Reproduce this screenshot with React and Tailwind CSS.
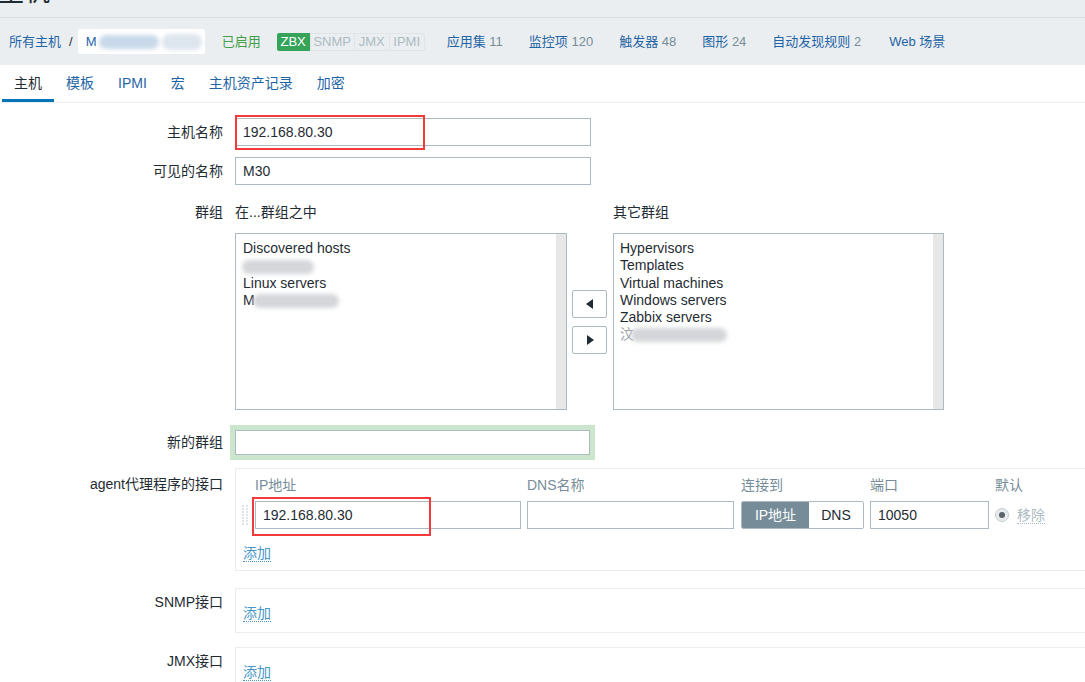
import React from "react"

const labelCls = "w-[235px] shrink-0 pr-[12px] text-right text-[#1f2c33]"
const inputBase = "border border-[#acbbc2] bg-white px-[7px] text-[#1f2c33] outline-none"
const inputCls = `h-[28px] ${inputBase}`

function Blur({ w, className = "" }) {
  return <span className={`inline-block h-[14px] rounded-full bg-[#d4d6d9] blur-[2px] align-middle ${className}`} style={{ width: w }} />
}

function AddLink() {
  return (
    <span className="border-b border-dotted border-[#4796c4] leading-[16px] text-[#4796c4]">添加</span>
  )
}

function NavLink({ text, count }) {
  return (
    <span className="text-[#1f65a6]">
      {text}
      {count !== undefined && <span className="text-[#768d99]"> {count}</span>}
    </span>
  )
}

export default function App() {
  return (
    <div className="relative h-[682px] w-[1085px] overflow-hidden bg-white font-['Liberation_Sans','Noto_Sans_CJK_SC',sans-serif] text-[14px] text-[#1f2c33]">
      {/* page title, cut off at the top */}
      <div className="h-[18px] overflow-hidden border-b border-[#dde1e4] bg-[#ebeef0]">
        <div className="-mt-[22px] -ml-[2px] text-[26px] leading-[28px] text-[#1f2c33]">主机</div>
      </div>

      {/* breadcrumb / host navigation */}
      <div className="flex h-[47px] items-center bg-[#ebeef0] pl-[9px] text-[13px]">
        <span className="text-[#1f65a6]">所有主机</span>
        <span className="ml-[8px] text-[#1f2c33]">/</span>
        <div className="ml-[5px] flex h-[25px] w-[127px] items-center gap-[3px] rounded-[2px] bg-white pl-[8px]">
          <span className="text-[#1f65a6]">M</span>
          <span className="inline-block h-[14px] w-[60px] rounded-full bg-[#c9d9ea] blur-[2px]" />
          <span className="inline-block h-[16px] w-[40px] rounded-full bg-[#dde5ee] blur-[2px]" />
        </div>
        <span className="ml-[17px] text-[#429e47]">已启用</span>
        <div className="ml-[16px] flex h-[18px] items-stretch text-[13px] leading-[18px]">
          <span className="w-[33px] rounded-l-[2px] bg-[#35a45a] text-center text-white">ZBX</span>
          <span className="w-[45px] border border-[#dfe4e7] text-center leading-[16px] text-[#acbbc2]">SNMP</span>
          <span className="w-[34px] border-y border-[#dfe4e7] text-center leading-[16px] text-[#acbbc2]">JMX</span>
          <span className="w-[36px] rounded-r-[2px] border border-[#dfe4e7] text-center leading-[16px] text-[#acbbc2]">IPMI</span>
        </div>
        <div className="ml-[22px] flex items-center gap-[26px]">
          <NavLink text="应用集" count={11} />
          <NavLink text="监控项" count={120} />
          <NavLink text="触发器" count={48} />
          <NavLink text="图形" count={24} />
          <NavLink text="自动发现规则" count={2} />
          <span className="ml-[2px] text-[#1f65a6]">Web 场景</span>
        </div>
      </div>

      {/* tabs */}
      <div className="flex h-[38px] items-end border-b border-[#ebeef0] pl-[2px]">
        <div className="flex h-[37px] items-center border-b-[3px] border-[#0275b8] px-[12px] pt-[3px] text-[#1f2c33]">主机</div>
        {["模板", "IPMI", "宏", "主机资产记录", "加密"].map((t) => (
          <div key={t} className="flex h-[37px] items-center border-b-[3px] border-transparent px-[12px] pt-[3px] text-[#1f65a6]">
            {t}
          </div>
        ))}
      </div>

      {/* form */}
      <div className="pt-[15px]">
        <div className="flex items-center">
          <div className={labelCls}>主机名称</div>
          <input readOnly value="192.168.80.30" className={`${inputCls} w-[356px]`} />
        </div>

        <div className="mt-[11px] flex items-center">
          <div className={labelCls}>可见的名称</div>
          <input readOnly value="M30" className={`${inputCls} w-[356px]`} />
        </div>

        <div className="mt-[19px] flex">
          <div className={`${labelCls} leading-[17px]`}>群组</div>
          <div>
            <div className="flex leading-[17px]">
              <span className="w-[378px]">在...群组之中</span>
              <span>其它群组</span>
            </div>
            <div className="mt-[12px] flex items-center">
              <div className="flex h-[177px] w-[332px] border border-[#acbbc2]">
                <div className="flex-1 pl-[7px] pt-[6px] leading-[17.3px]">
                  <div>Discovered hosts</div>
                  <div><Blur w={72} className="-ml-[1px]" /></div>
                  <div>Linux servers</div>
                  <div className="flex items-center">M<Blur w={86} className="-ml-[2px]" /></div>
                </div>
                <div className="w-[10px] bg-[#e7e7e7]" />
              </div>
              <div className="ml-[5px] flex flex-col gap-[8px]">
                <button className="flex h-[28px] w-[35px] items-center justify-center rounded-[2px] border border-[#acbbc2] bg-white">
                  <svg width="8" height="10" viewBox="0 0 8 10"><path d="M7 0 L0 5 L7 10 Z" fill="#1f2c33" /></svg>
                </button>
                <button className="flex h-[28px] w-[35px] items-center justify-center rounded-[2px] border border-[#acbbc2] bg-white">
                  <svg width="8" height="10" viewBox="0 0 8 10"><path d="M1 0 L8 5 L1 10 Z" fill="#1f2c33" /></svg>
                </button>
              </div>
              <div className="ml-[6px] flex h-[177px] w-[331px] border border-[#acbbc2]">
                <div className="flex-1 pl-[6px] pt-[6px] leading-[17.3px]">
                  <div>Hypervisors</div>
                  <div>Templates</div>
                  <div>Virtual machines</div>
                  <div>Windows servers</div>
                  <div>Zabbix servers</div>
                  <div className="flex items-center">
                    <span className="text-[#9aa4aa]">汶</span>
                    <Blur w={96} className="-ml-[3px]" />
                  </div>
                </div>
                <div className="w-[10px] bg-[#e7e7e7]" />
              </div>
            </div>
          </div>
        </div>

        <div className="mt-[15px] flex items-center">
          <div className={labelCls}>新的群组</div>
          <div className="-ml-[5px] bg-[#cbe6cc] p-[5px]">
            <input readOnly value="" className={`h-[25px] w-[355px] ${inputBase}`} />
          </div>
        </div>

        <div className="mt-[8px] flex">
          <div className={`${labelCls} pt-[8px] leading-[17px]`}>agent代理程序的接口</div>
          <div className="h-[103px] w-[860px] shrink-0 border border-[#ebeef0] pl-[6px] pt-[8px]">
            <div className="flex items-center leading-[17px] text-[#768d99]">
              <span className="w-[13px]" />
              <span className="w-[272px]">IP地址</span>
              <span className="w-[214px]">DNS名称</span>
              <span className="w-[129px]">连接到</span>
              <span className="w-[125px]">端口</span>
              <span>默认</span>
            </div>
            <div className="mt-[7px] flex items-center">
              <svg width="7" height="21" viewBox="0 0 7 21" className="mr-[6px]">
                {[1, 4, 7, 10, 13, 16, 19].map((y) =>
                  [1, 5].map((x) => <rect key={`${x}-${y}`} x={x - 1} y={y - 1} width="2" height="2" fill="#dfe4e7" />)
                )}
              </svg>
              <input readOnly value="192.168.80.30" className={`${inputCls} w-[266px] border-[#0275b8]`} />
              <input readOnly value="" className={`${inputCls} ml-[6px] w-[207px]`} />
              <div className="ml-[7px] flex h-[28px] w-[123px] overflow-hidden rounded-[2px] border border-[#acbbc2]">
                <span className="flex w-[67px] items-center justify-center bg-[#768d99] text-white">IP地址</span>
                <span className="flex flex-1 items-center justify-center bg-white text-[#1f2c33]">DNS</span>
              </div>
              <input readOnly value="10050" className={`${inputCls} ml-[6px] w-[119px]`} />
              <span className="ml-[6px] flex h-[14px] w-[14px] items-center justify-center rounded-full border border-[#c5ccd0] bg-[#e8ebec]">
                <span className="h-[6px] w-[6px] rounded-full bg-[#5a646a]" />
              </span>
              <span className="ml-[8px] border-b border-dotted border-[#acbbc2] leading-[16px] text-[#acbbc2]">移除</span>
            </div>
            <div className="mt-[14px] pl-[1px]">
              <AddLink />
            </div>
          </div>
        </div>

        <div className="mt-[17px] flex">
          <div className={`${labelCls} pt-[6px] leading-[17px]`}>SNMP接口</div>
          <div className="h-[45px] w-[860px] shrink-0 border border-[#ebeef0] pl-[7px] pt-[14px]">
            <AddLink />
          </div>
        </div>

        <div className="mt-[14px] flex">
          <div className={`${labelCls} pt-[6px] leading-[17px]`}>JMX接口</div>
          <div className="h-[45px] w-[860px] shrink-0 border border-[#ebeef0] pl-[7px] pt-[14px]">
            <AddLink />
          </div>
        </div>
      </div>

      {/* red annotation boxes drawn over the screenshot */}
      <div className="pointer-events-none absolute left-[235px] top-[115px] h-[35px] w-[190px] border-2 border-[#f23a3a]" />
      <div className="pointer-events-none absolute left-[252px] top-[497px] h-[39px] w-[179px] border-2 border-[#f23a3a]" />
    </div>
  )
}
